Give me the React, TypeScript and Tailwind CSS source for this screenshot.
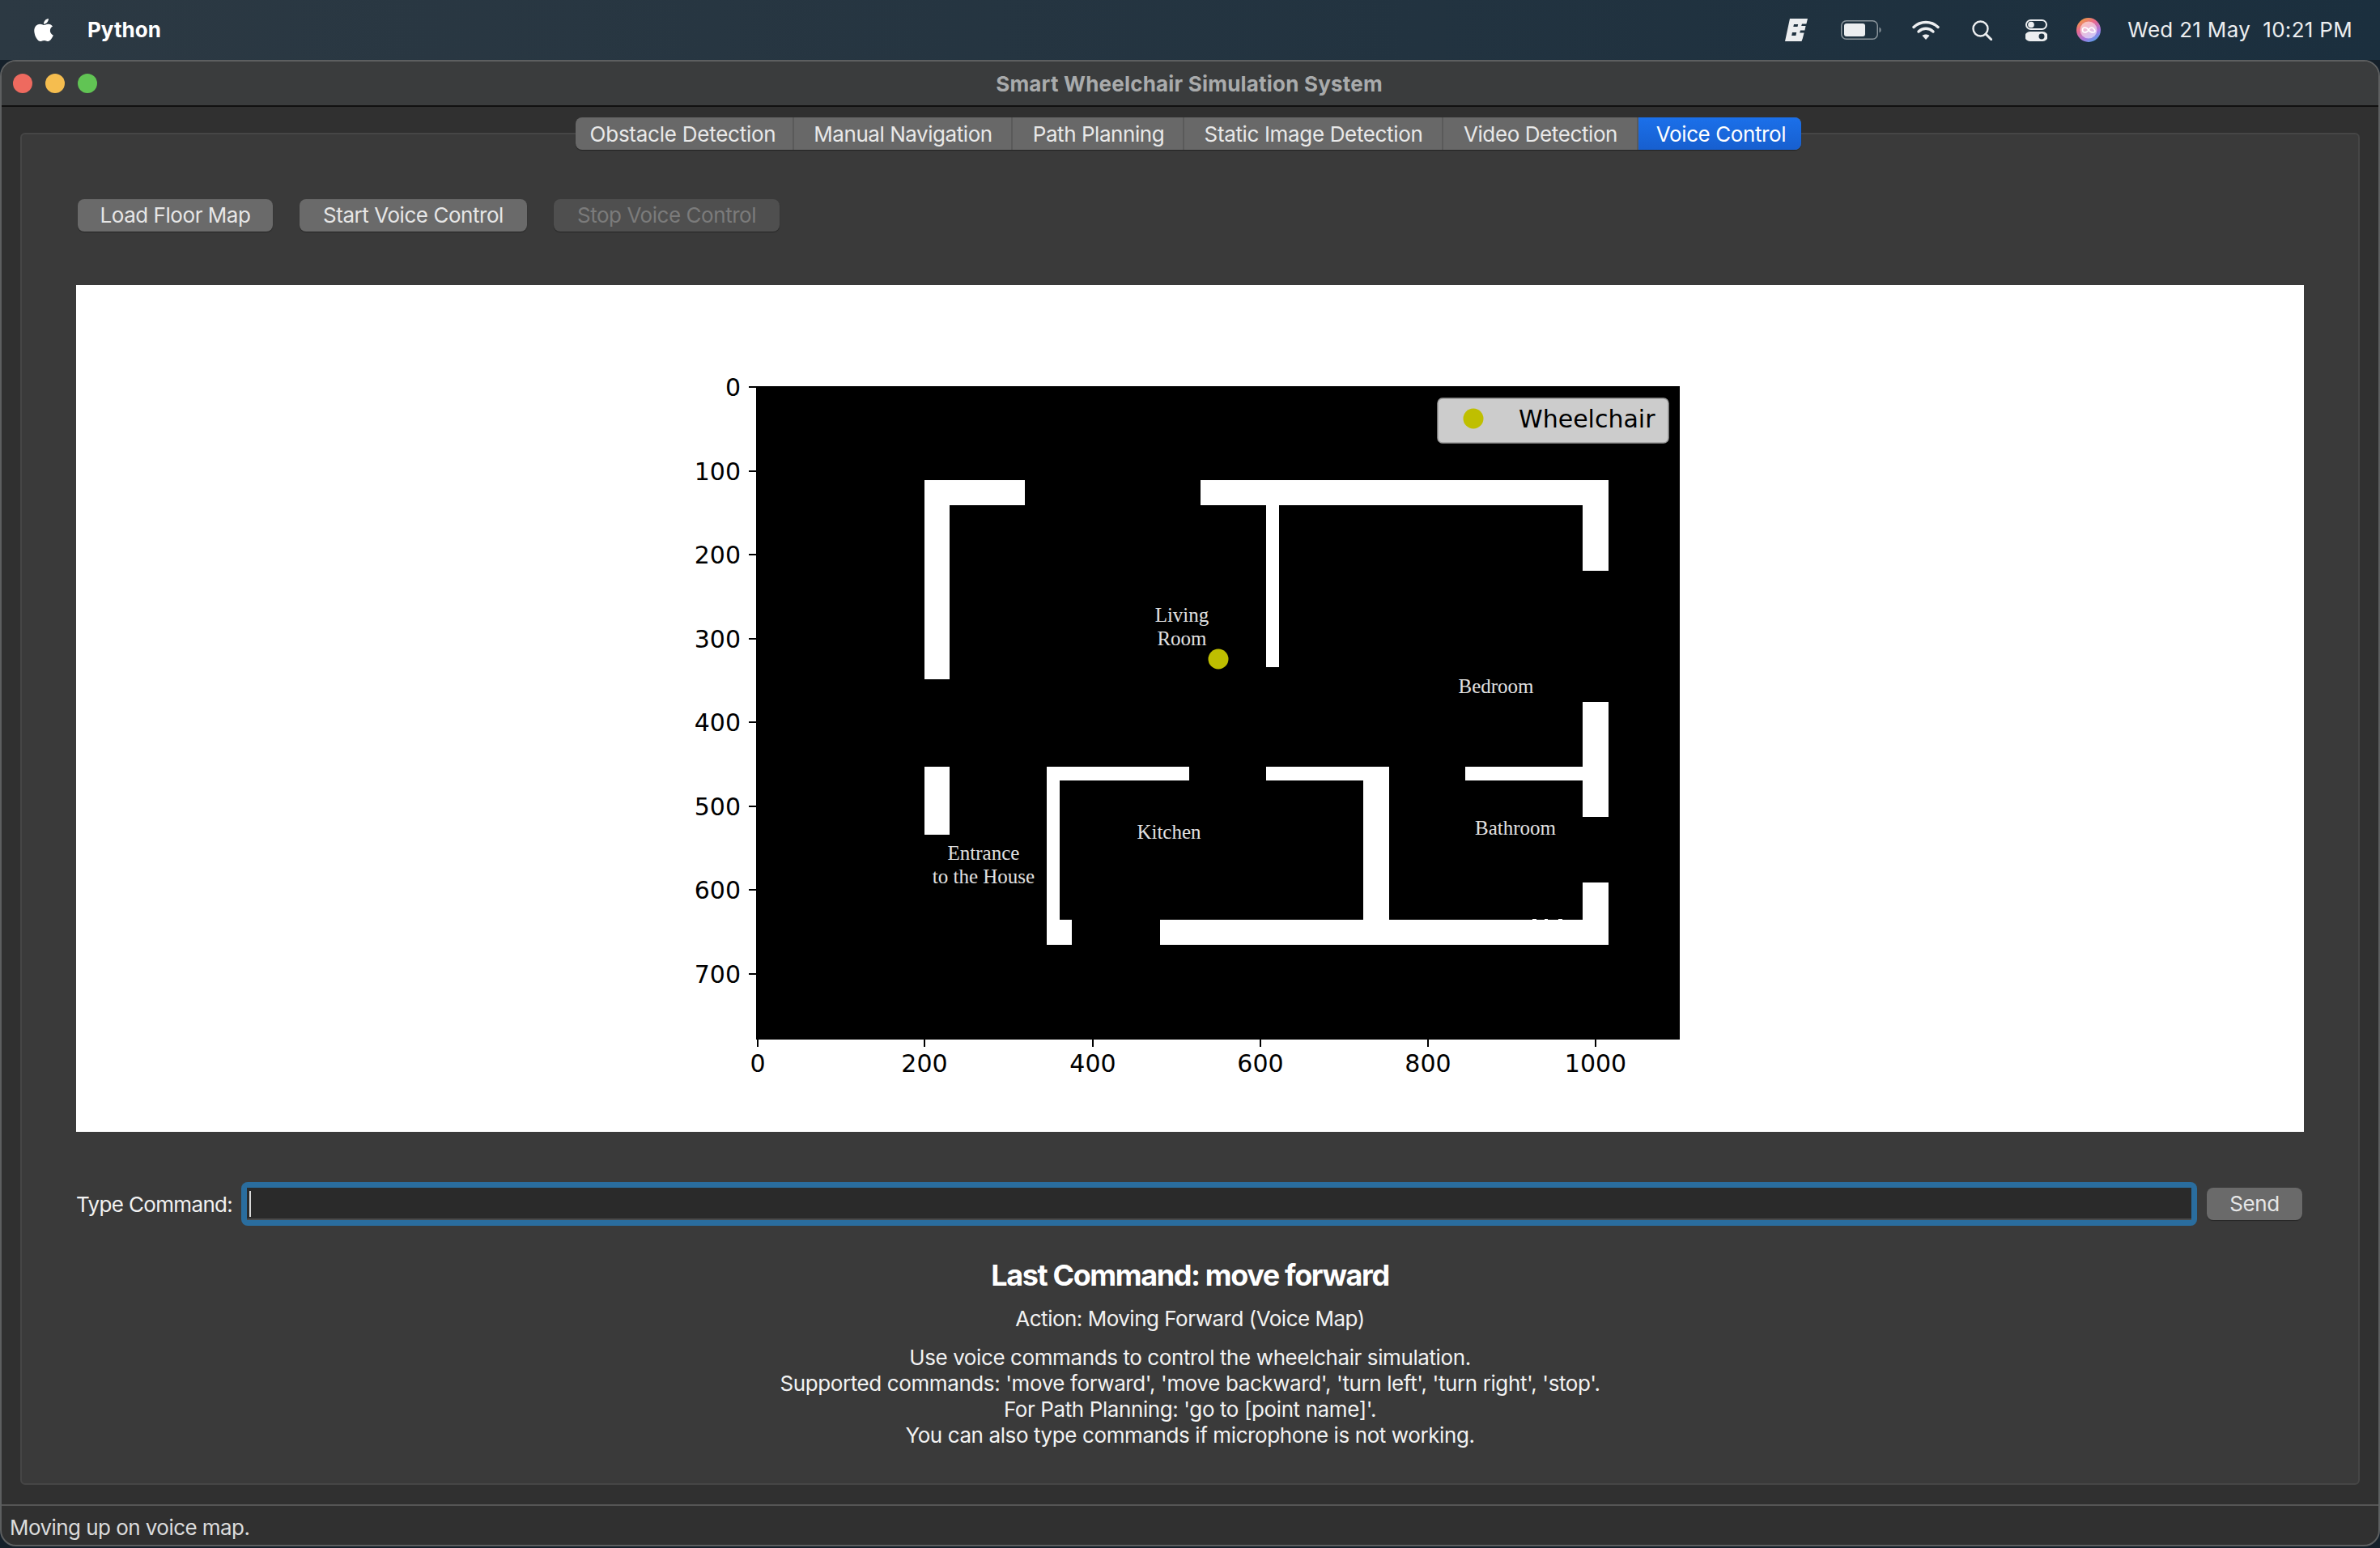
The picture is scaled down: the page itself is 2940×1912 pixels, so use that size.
import { FaApple } from "react-icons/fa";

const tabs = [
  { label: "Obstacle Detection", w: "w-[270px]", x: "pr-[3px] tracking-[-0.25px]" },
  { label: "Manual Navigation", w: "w-[270px]", x: "pl-[1px] tracking-[-0.45px]" },
  { label: "Path Planning", w: "w-[212px]", x: "pl-[2px] tracking-[-0.45px]" },
  { label: "Static Image Detection", w: "w-[320px]", x: "pl-[1px] tracking-[-0.35px]" },
  { label: "Video Detection", w: "w-[241px]", x: "pl-[1px] tracking-[-0.4px]" },
];

const walls: [number, number, number, number][] = [
  [1142, 593, 31, 246],
  [1142, 593, 124, 31],
  [1483, 593, 504, 31],
  [1955, 593, 32, 112],
  [1564, 624, 16, 200],
  [1955, 867, 32, 142],
  [1810, 947, 145, 17],
  [1142, 947, 31, 84],
  [1293, 947, 16, 220],
  [1293, 947, 176, 17],
  [1293, 1136, 31, 31],
  [1564, 947, 152, 17],
  [1684, 947, 32, 189],
  [1433, 1136, 554, 31],
  [1955, 1090, 32, 77],
  [1893, 1135, 5, 1],
  [1908, 1135, 4, 1],
  [1925, 1135, 5, 1],
];

const yTicks = [
  ["0", 478],
  ["100", 582],
  ["200", 685],
  ["300", 789],
  ["400", 892],
  ["500", 996],
  ["600", 1099],
  ["700", 1203],
] as const;

const xTicks = [
  ["0", 936],
  ["200", 1142],
  ["400", 1350],
  ["600", 1557],
  ["800", 1764],
  ["1000", 1971],
] as const;

const rooms = [
  ["Living", 1460, 768],
  ["Room", 1460, 797],
  ["Bedroom", 1848, 856],
  ["Kitchen", 1444, 1036],
  ["Bathroom", 1872, 1031],
  ["Entrance", 1215, 1062],
  ["to the House", 1215, 1091],
] as const;

function FloorPlot() {
  return (
    <svg viewBox="94 352 2752 1046" className="block h-[1046px] w-[2752px] bg-white">
      <rect x="934" y="477" width="1141" height="807" fill="#000" />
      {walls.map(([x, y, w, h], i) => (
        <rect key={i} x={x} y={y} width={w} height={h} fill="#fff" />
      ))}
      {rooms.map(([t, x, y]) => (
        <text key={t} x={x} y={y} textAnchor="middle" fill="#e0e0e0" fontSize="25" className="[font-family:'Liberation_Serif',serif]">
          {t}
        </text>
      ))}
      <circle cx="1505" cy="814" r="12.5" fill="#bfbf00" />
      <rect x="1776" y="492" width="285" height="55" rx="6" fill="#cccccc" stroke="#9a9a9a" strokeWidth="1.5" />
      <circle cx="1820" cy="517" r="12.5" fill="#bfbf00" />
      <text x="1876" y="528" fontSize="30" fill="#000" className="[font-family:'DejaVu_Sans',sans-serif]">
        Wheelchair
      </text>
      {yTicks.map(([t, y]) => (
        <g key={t}>
          <rect x="925" y={y - 1} width="9" height="2" fill="#000" />
          <text x="915" y={y + 11} textAnchor="end" fontSize="30" fill="#000" className="[font-family:'DejaVu_Sans',sans-serif]">
            {t}
          </text>
        </g>
      ))}
      {xTicks.map(([t, x]) => (
        <g key={t}>
          <rect x={x - 1} y="1284" width="2" height="9" fill="#000" />
          <text x={x} y="1324" textAnchor="middle" fontSize="30" fill="#000" className="[font-family:'DejaVu_Sans',sans-serif]">
            {t}
          </text>
        </g>
      ))}
    </svg>
  );
}

function StatusIcons() {
  return (
    <div className="flex items-center">
      <svg viewBox="0 0 28 28" className="h-[28px] w-[28px]">
        <path
          d="M6 0H28L26.4 6.5H21L20.2 9H25.6L24.4 14.5H19L18.2 17.5H23.6L21.8 24.5 20.5 28H0Z M11 7 10.3 10H15.5L16.2 7Z M9 17 8.2 21H13.4L14.2 17Z"
          fill="#eceef0"
          fillRule="evenodd"
        />
      </svg>
      <svg viewBox="0 0 50 24" className="ml-[41px] h-[24px] w-[50px]">
        <rect x="0.75" y="0.75" width="44.5" height="22.5" rx="6" fill="none" stroke="#8b959c" strokeWidth="1.5" />
        <rect x="4" y="4" width="26" height="16" rx="3" fill="#eceef0" />
        <path d="M47.5 8.5C49 9.5 49.6 10.5 49.6 12S49 14.5 47.5 15.5Z" fill="#8b959c" />
      </svg>
      <svg viewBox="0 0 34 24" className="ml-[38px] h-[24px] w-[34px]" fill="none" stroke="#eceef0" strokeWidth="3.4" strokeLinecap="round">
        <path d="M2 8.5C10.5 .5 23.5 .5 32 8.5" />
        <path d="M8 14C13.5 9 20.5 9 26 14" />
        <path d="M17 24 12.5 19C15 17 19 17 21.5 19Z" fill="#eceef0" stroke="none" />
      </svg>
      <svg viewBox="0 0 25 25" className="ml-[40px] h-[25px] w-[25px]" fill="none" stroke="#eceef0" strokeWidth="2.4" strokeLinecap="round">
        <circle cx="10.5" cy="10.5" r="9" />
        <path d="M17 17 24 24" strokeWidth="3" />
      </svg>
      <svg viewBox="0 0 27 27" className="ml-[41px] h-[27px] w-[27px]">
        <rect x="1" y="1" width="25" height="11" rx="5.5" fill="none" stroke="#eceef0" strokeWidth="2" />
        <circle cx="7" cy="6.5" r="3.8" fill="#eceef0" />
        <path
          d="M5.5 15H21.5A5.75 5.75 0 0 1 21.5 27H5.5A5.75 5.75 0 0 1 5.5 15ZM20 17.5A3.5 3.5 0 1 0 20.01 24.5 3.5 3.5 0 1 0 20 17.5Z"
          fill="#eceef0"
          fillRule="evenodd"
        />
      </svg>
      <svg viewBox="0 0 30 30" className="ml-[36px] h-[30px] w-[30px]">
        <defs>
          <linearGradient id="siri" x1="0.2" y1="0" x2="0.8" y2="1">
            <stop offset="0" stopColor="#f0a13c" />
            <stop offset="0.35" stopColor="#e8688f" />
            <stop offset="0.7" stopColor="#a678e0" />
            <stop offset="1" stopColor="#4aa8ec" />
          </linearGradient>
        </defs>
        <circle cx="15" cy="15" r="15" fill="url(#siri)" />
        <circle cx="15" cy="15" r="10.5" fill="#fff" opacity="0.55" />
        <path d="M15 15C12.5 11 7.5 11 7.5 15S12.5 19 15 15 20 11 22.5 15 17.5 19 15 15Z" fill="none" stroke="#fff" strokeWidth="1.6" />
      </svg>
    </div>
  );
}

const btnBase =
  "flex h-[40px] items-center justify-center rounded-[8px] pb-[2px] text-[26px] tracking-[-0.45px] shadow-[0_1px_1px_rgba(0,0,0,0.35)]";
const btn = `${btnBase} bg-[#6a6a6a] text-[#e6e6e6]`;
const btnDisabled = `${btnBase} bg-[#4f4f4f] text-[#7b7b7b]`;

export default function App() {
  return (
    <div className="flex h-[1912px] w-[2940px] flex-col overflow-hidden bg-[#15202a] text-white [font-family:Inter,'Liberation_Sans',sans-serif]">
      {/* macOS menu bar */}
      <header className="flex h-[74px] shrink-0 items-center justify-between bg-gradient-to-r from-[#2c3943] to-[#1b2f3e] pl-[41px] pr-[34px]">
        <div className="flex items-center">
          <FaApple className="h-[32px] w-[26px] text-white" />
          <span className="ml-[41px] pb-[2px] text-[26px] font-bold">Python</span>
        </div>
        <div className="flex items-center">
          <StatusIcons />
          <span className="ml-[33px] whitespace-pre pb-[2px] text-[26px] tracking-[0.3px] text-[#eceef0]">Wed 21 May  10:21 PM</span>
        </div>
      </header>

      {/* Window */}
      <div className="mb-[2px] flex flex-1 flex-col overflow-hidden rounded-[20px] border-2 border-[#5d5f60] bg-[#303030]">
        <div className="flex h-[56px] shrink-0 items-center border-b-2 border-[#111] bg-[#3a3c3d] pl-[14px]">
          <div className="flex gap-[16px]">
            <span className="h-[24px] w-[24px] rounded-full bg-[#ee6a5f]" />
            <span className="h-[24px] w-[24px] rounded-full bg-[#f5bd4f]" />
            <span className="h-[24px] w-[24px] rounded-full bg-[#61c454]" />
          </div>
          <span className="flex-1 pr-[120px] text-center text-[26px] font-bold tracking-[0.2px] text-[#a9abac]">Smart Wheelchair Simulation System</span>
        </div>

        <div className="flex flex-1 flex-col">
          {/* Tabs */}
          <div className="relative z-10 mt-[13px] -mb-[21px] flex justify-center pr-[4px]">
            <div className="flex h-[40px] overflow-hidden rounded-[8px] bg-[#686868] text-[26px] text-[#e8e8e8] shadow-[0_1px_1px_rgba(0,0,0,0.4)]">
              {tabs.map((t) => (
                <div key={t.label} className={`flex items-center justify-center border-r-2 border-[#5a5a5a] ${t.w} ${t.x}`}>
                  {t.label}
                </div>
              ))}
              <div className="flex w-[201px] items-center justify-center bg-gradient-to-b from-[#1b70ea] to-[#175fcf] pl-[3px] tracking-[-0.4px] text-white">Voice Control</div>
            </div>
          </div>

          {/* Tab pane */}
          <div className="mx-[23px] flex h-[1670px] flex-col rounded-[6px] border-2 border-[#464646] bg-[#3a3a3a] px-[67px] pt-[80px]">
            <div className="flex gap-[33px] pl-[2px]">
              <div className={`${btn} w-[241px]`}>Load Floor Map</div>
              <div className={`${btn} w-[281px]`}>Start Voice Control</div>
              <div className={`${btnDisabled} w-[279px]`}>Stop Voice Control</div>
            </div>

            <div className="mt-[66px]">
              <FloorPlot />
            </div>

            <div className="mt-[62px] flex h-[54px] items-center">
              <span className="w-[204px] text-[26px] tracking-[-0.65px] text-[#f2f2f2]">Type Command:</span>
              <div className="relative h-[54px] w-[2416px] rounded-[8px] bg-[#2a6d9e] p-[7px]">
                <input
                  readOnly
                  aria-label="Type Command"
                  className="block h-full w-full border-b-2 border-[#4a4a4a] bg-[#2a2a2a] outline-none"
                />
                <span className="absolute left-[10px] top-[11px] h-[32px] w-[2px] bg-[#d8d8d8]" />
              </div>
              <div className={`${btn} ml-[12px] w-[118px]`}>Send</div>
            </div>

            <div className="mt-[38px] text-center">
              <p className="text-[36px] font-bold leading-[46px] tracking-[-1.4px]">Last Command: move forward</p>
              <p className="mt-[15px] text-[26px] leading-[32px] tracking-[-0.5px] text-[#f2f2f2]">Action: Moving Forward (Voice Map)</p>
              <div className="mt-[16px] text-[26px] leading-[32px] tracking-[-0.4px] text-[#f2f2f2]">
                <p>Use voice commands to control the wheelchair simulation.</p>
                <p>Supported commands: 'move forward', 'move backward', 'turn left', 'turn right', 'stop'.</p>
                <p>For Path Planning: 'go to [point name]'.</p>
                <p>You can also type commands if microphone is not working.</p>
              </div>
            </div>
          </div>

          {/* Status bar */}
          <div className="mt-auto flex h-[50px] items-center border-t-2 border-[#555] pl-[10px] pt-[4px] text-[26px] tracking-[-0.55px] text-[#dcdcdc]">Moving up on voice map.</div>
        </div>
      </div>
    </div>
  );
}
